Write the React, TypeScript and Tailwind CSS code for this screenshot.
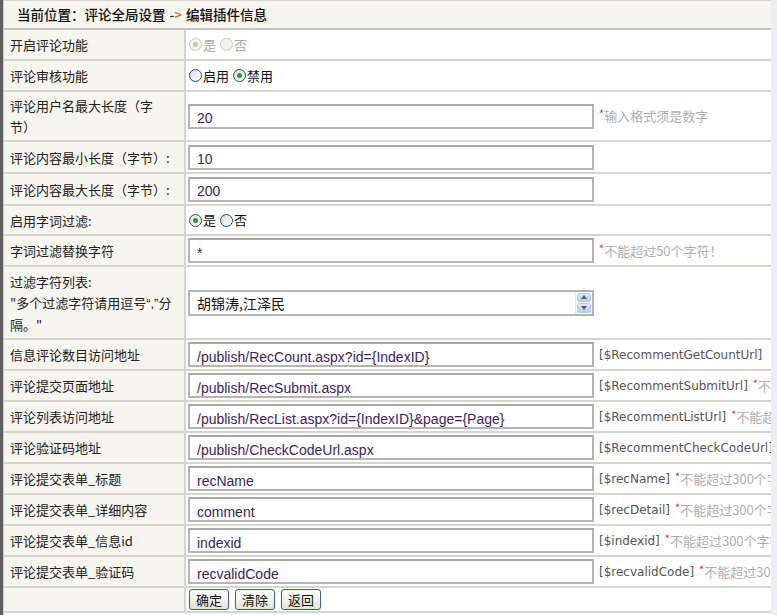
import React from 'react';

const CJK = "font-['Noto_Sans_CJK_SC',sans-serif]";

type Choice = { text: string; checked?: boolean };

function Radio({ checked, disabled }: { checked?: boolean; disabled?: boolean }) {
  return (
    <span
      className={`inline-flex h-[13px] w-[13px] items-center justify-center rounded-full border ${
        disabled ? 'border-[#cac8bb] bg-[#f4f3ee]' : 'border-[#1c5180] bg-gradient-to-br from-[#dcdcd6] to-white'
      }`}
    >
      {checked && (
        <span className={`h-[5px] w-[5px] rounded-full ${disabled ? 'bg-[#cac8bb]' : 'bg-[#21a121]'}`} />
      )}
    </span>
  );
}

function Radios({ items, disabled }: { items: Choice[]; disabled?: boolean }) {
  return (
    <div className={`flex items-center gap-[4px] pl-[3px] text-[13px] ${disabled ? 'text-[#aca899]' : 'text-[#111]'}`}>
      {items.map((c) => (
        <label key={c.text} className="flex items-center gap-[1px]">
          <Radio checked={c.checked} disabled={disabled} />
          <span>{c.text}</span>
        </label>
      ))}
    </div>
  );
}

function Box({ value }: { value: string }) {
  return (
    <div className="ml-[2px] flex h-[25px] w-[406px] shrink-0 items-center border-2 border-[#b4b4b4] border-t-[#a8a8a8] bg-white pl-[7px] pt-[5px] font-['Liberation_Sans',sans-serif] text-[14px] text-[#3c1f5c]">
      {value}
    </div>
  );
}

function Note({ tag, warn }: { tag?: string; warn?: string }) {
  return (
    <div className="ml-[5px] flex items-center whitespace-nowrap text-[12px]">
      {tag && <span className="mr-[5px] font-['DejaVu_Sans',sans-serif] text-[#555]">{tag}</span>}
      {warn && (
        <span className={`${CJK} text-[13px] text-[#b0b0b0]`}>
          <span className="relative -top-[3px] text-[11px] text-[#f03030]">*</span>
          {warn}
        </span>
      )}
    </div>
  );
}

function Row({ label, h, children }: { label: React.ReactNode; h: string; children?: React.ReactNode }) {
  return (
    <div className={`flex ${h} border-b-2 border-[#d6d5cd]`}>
      <div className="flex w-[182px] shrink-0 items-center border-r-2 border-[#d6d5cd] bg-[#f6f5ee] pl-[6px] pr-[2px] text-[13px] leading-[21px] text-[#222]">
        <div className="whitespace-nowrap">{label}</div>
      </div>
      <div className="flex min-w-0 flex-1 items-center overflow-hidden bg-white">{children}</div>
    </div>
  );
}

export default function App() {
  return (
    <div className={`flex h-[615px] w-[777px] overflow-hidden bg-white ${CJK}`}>
      <div className="w-[3px] shrink-0 bg-[#5f5f5f]" />
      <div className="w-[768px] shrink-0 border-l border-[#cfcfc8]">
        <div className="flex h-[30px] items-center border-t border-b-2 border-[#d8d7cf] border-b-[#c4c3ba] bg-[#f6f5ee] pl-[13px] text-[13.5px] font-medium text-[#111]">
          当前位置：评论全局设置 <span className="mx-[4px] text-[#222]">-<span className="text-[#d07000]">&gt;</span></span> 编辑插件信息
        </div>

        <Row label="开启评论功能" h="h-[31px]">
          <Radios disabled items={[{ text: '是', checked: true }, { text: '否' }]} />
        </Row>
        <Row label="评论审核功能" h="h-[31px]">
          <Radios items={[{ text: '启用' }, { text: '禁用', checked: true }]} />
        </Row>
        <Row
          label={
            <>
              评论用户名最大长度（字
              <br />
              节）
            </>
          }
          h="h-[50px]"
        >
          <Box value="20" />
          <Note warn="输入格式须是数字" />
        </Row>
        <Row label="评论内容最小长度（字节）:" h="h-[32px]">
          <Box value="10" />
        </Row>
        <Row label="评论内容最大长度（字节）:" h="h-[32px]">
          <Box value="200" />
        </Row>
        <Row label="启用字词过滤:" h="h-[30px]">
          <Radios items={[{ text: '是', checked: true }, { text: '否' }]} />
        </Row>
        <Row label="字词过滤替换字符" h="h-[31px]">
          <Box value="*" />
          <Note warn="不能超过50个字符！" />
        </Row>
        <Row
          label={
            <>
              过滤字符列表:
              <br />
              "多个过滤字符请用逗号<span className="font-['Liberation_Sans',sans-serif]">“,”</span>分
              <br />
              隔。"
            </>
          }
          h="h-[73px]"
        >
          <div className="ml-[2px] flex h-[26px] w-[406px] shrink-0 border-2 border-[#b4b4b4] bg-white">
            <div className={`flex-1 pl-[7px] pt-[1px] text-[14px] text-[#111] ${CJK}`}>胡锦涛,江泽民</div>
            <div className="flex w-[17px] flex-col gap-[1px] border-l border-[#e4e4e4] p-[1px]">
              <div className="flex flex-1 items-center justify-center rounded-[2px] border border-[#b8c9ea] bg-gradient-to-b from-[#dde8fb] to-[#b9cdf2]">
                <svg width="6" height="4" viewBox="0 0 6 4"><path d="M0 4L3 0L6 4Z" fill="#4d6185" /></svg>
              </div>
              <div className="flex flex-1 items-center justify-center rounded-[2px] border border-[#b8c9ea] bg-gradient-to-b from-[#dde8fb] to-[#b9cdf2]">
                <svg width="6" height="4" viewBox="0 0 6 4"><path d="M0 0L3 4L6 0Z" fill="#4d6185" /></svg>
              </div>
            </div>
          </div>
        </Row>
        <Row label="信息评论数目访问地址" h="h-[31px]">
          <Box value="/publish/RecCount.aspx?id={IndexID}" />
          <Note tag="[$RecommentGetCountUrl]" />
        </Row>
        <Row label="评论提交页面地址" h="h-[31px]">
          <Box value="/publish/RecSubmit.aspx" />
          <Note tag="[$RecommentSubmitUrl]" warn="不能超过300个字符！" />
        </Row>
        <Row label="评论列表访问地址" h="h-[31px]">
          <Box value="/publish/RecList.aspx?id={IndexID}&page={Page}" />
          <Note tag="[$RecommentListUrl]" warn="不能超过300个字符！" />
        </Row>
        <Row label="评论验证码地址" h="h-[31px]">
          <Box value="/publish/CheckCodeUrl.aspx" />
          <Note tag="[$RecommentCheckCodeUrl]" />
        </Row>
        <Row label="评论提交表单_标题" h="h-[31px]">
          <Box value="recName" />
          <Note tag="[$recName]" warn="不能超过300个字符！" />
        </Row>
        <Row label="评论提交表单_详细内容" h="h-[31px]">
          <Box value="comment" />
          <Note tag="[$recDetail]" warn="不能超过300个字符！" />
        </Row>
        <Row label="评论提交表单_信息id" h="h-[31px]">
          <Box value="indexid" />
          <Note tag="[$indexid]" warn="不能超过300个字符！" />
        </Row>
        <Row label="评论提交表单_验证码" h="h-[31px]">
          <Box value="recvalidCode" />
          <Note tag="[$recvalidCode]" warn="不能超过300个字符！" />
        </Row>
        <Row label="" h="h-[25px]">
          <div className="ml-[3px] flex gap-[6px]">
            {['确定', '清除', '返回'].map((b) => (
              <button
                key={b}
                type="button"
                className="h-[21px] rounded-[3px] border border-[#2f5f95] bg-gradient-to-b from-white to-[#e6e3d6] px-[6px] text-[13px] leading-[18px] text-[#111]"
              >
                {b}
              </button>
            ))}
          </div>
        </Row>
      </div>
      <div className="flex-1 bg-[#e9eef8]" />
    </div>
  );
}
